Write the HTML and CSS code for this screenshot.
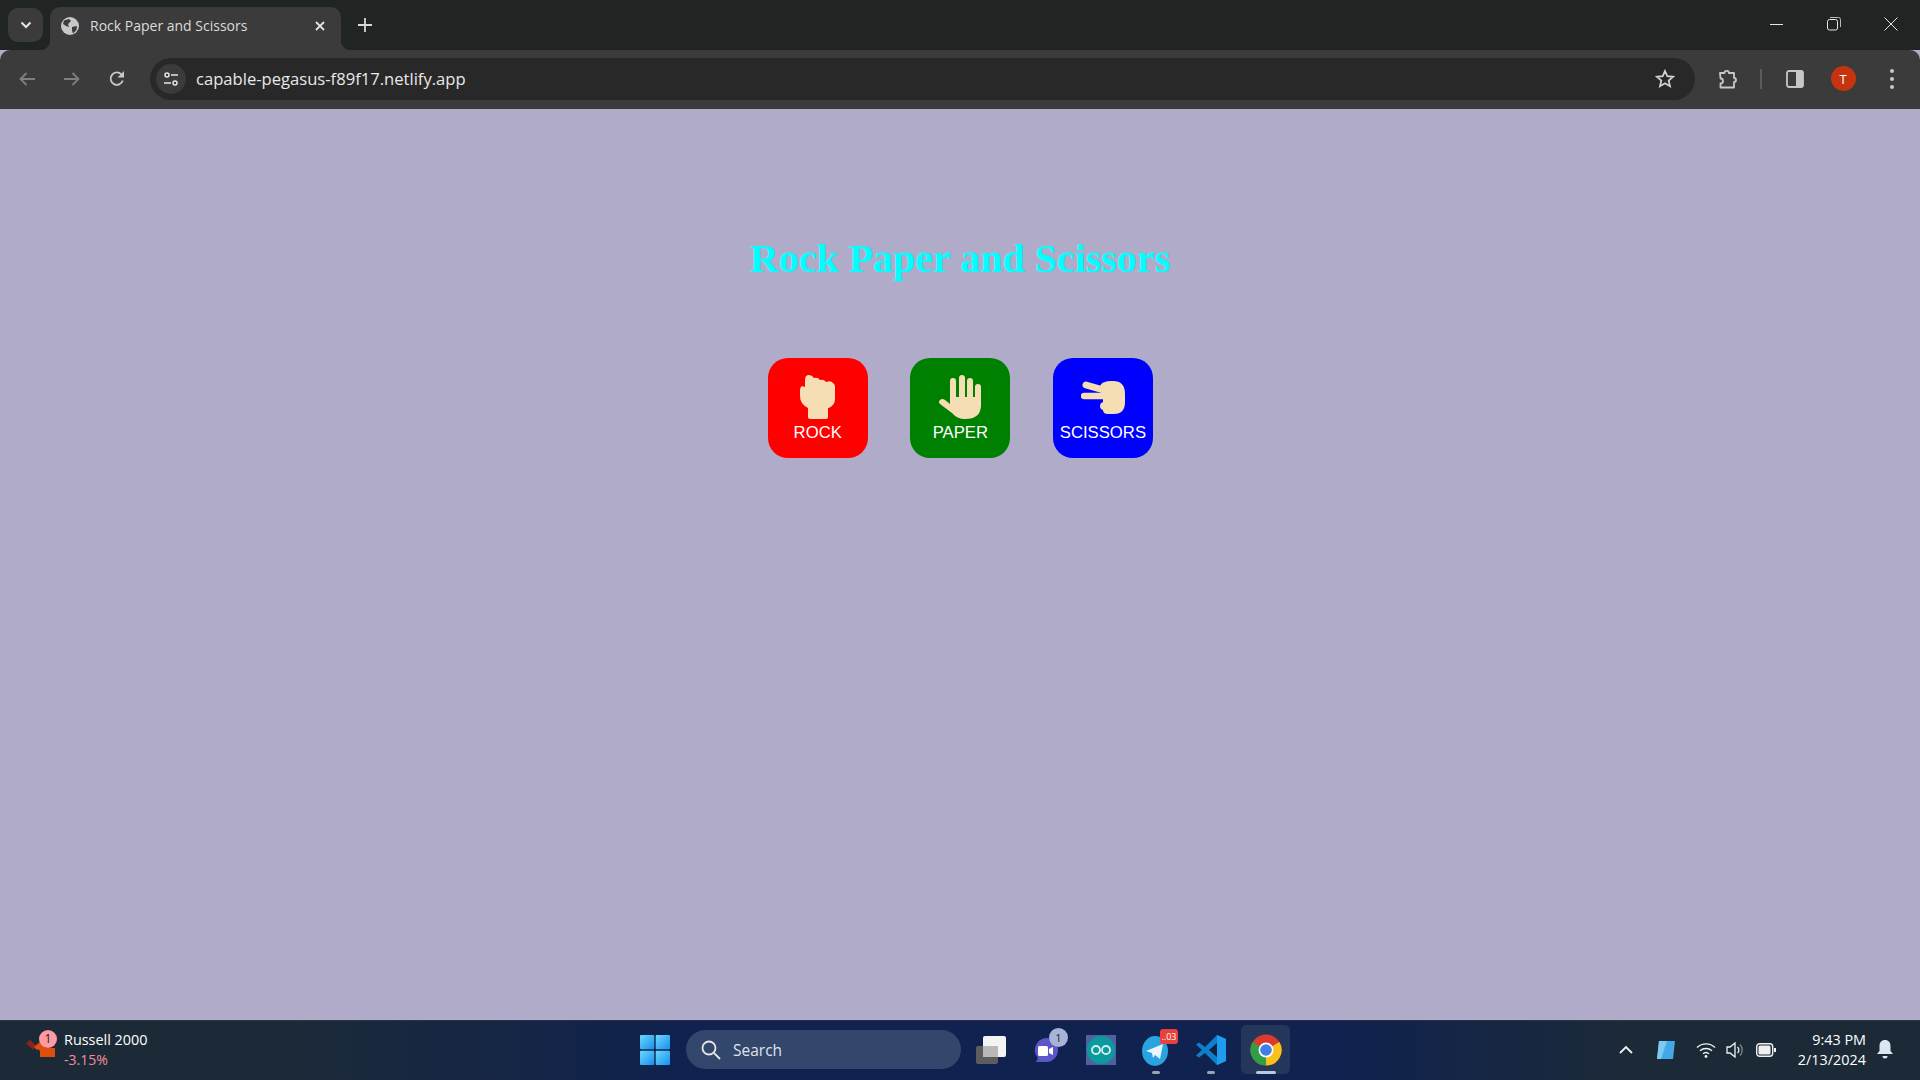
FILE: index.html
```html
<!DOCTYPE html>
<html>
<head>
    <title>Rock Paper and Scissors</title>
    <link rel="stylesheet" href="styles.css">
</head>
<body>
    <div class="tabstrip">
        <div class="tab-search">
            <svg width="12" height="8" viewBox="0 0 12 8"><path d="M1.500 1.500 6 6l4.500-4.500" fill="none" stroke="#e6e6e6" stroke-width="2"/></svg>
        </div>
        <div class="tab">
            <svg class="tab-globe" width="18" height="18" viewBox="0 0 18 18">
                <circle cx="9" cy="9" r="9" fill="#c7c7c7"/>
                <path d="M3 3.500 8 2l2 2-3 3 1 3-3-1-3-2zM11 10l5-1-.5 4-3.500 3.500-1-3z" fill="#3b3b3b"/>
            </svg>
            <span class="tab-title">Rock Paper and Scissors</span>
            <svg width="10" height="10" viewBox="0 0 10 10"><path d="M1 1l8 8M9 1l-8 8" stroke="#e2e2e2" stroke-width="1.800"/></svg>
        </div>
        <div class="new-tab">
            <svg width="14" height="14" viewBox="0 0 14 14"><path d="M7 0v14M0 7h14" stroke="#d8d8d8" stroke-width="1.800"/></svg>
        </div>
        <div class="window-controls">
            <svg width="14" height="14" viewBox="0 0 14 14"><path d="M0 7.500h13" stroke="#e6e6e6"/></svg>
            <svg width="14" height="14" viewBox="0 0 14 14"><rect x=".5" y="2.500" width="10" height="10.500" rx="2" fill="none" stroke="#e6e6e6"/><path d="M3 .5h8.500a2 2 0 0 1 2 2V10" fill="none" stroke="#b8b8b8"/></svg>
            <svg width="14" height="14" viewBox="0 0 14 14"><path d="M.5.5l13 13M13.500.5l-13 13" stroke="#e6e6e6"/></svg>
        </div>
    </div>

    <div class="toolbar">
        <div class="tool-btn">
            <svg width="16" height="14" viewBox="0 0 16 14"><path d="M16 7H1.500M7.500 1l-6 6 6 6" fill="none" stroke="#7f7f7f" stroke-width="1.800"/></svg>
        </div>
        <div class="tool-btn">
            <svg width="16" height="14" viewBox="0 0 16 14"><path d="M0 7h14.500M8.500 1l6 6-6 6" fill="none" stroke="#7f7f7f" stroke-width="1.800"/></svg>
        </div>
        <div class="tool-btn">
            <svg width="16" height="16" viewBox="0 0 16 16"><path d="M13.800 9.500A6.200 6.200 0 1 1 12.500 3.500L14 5" fill="none" stroke="#c7c7c7" stroke-width="1.800"/><path d="M15 0v6.500H8.500z" fill="#c7c7c7"/></svg>
        </div>
        <div class="omnibox">
            <div class="site-info">
                <svg width="16" height="14" viewBox="0 0 16 14">
                    <circle cx="4" cy="3" r="2" fill="none" stroke="#e6e6e6" stroke-width="1.500"/>
                    <path d="M8 3h7M1 11h7" stroke="#e6e6e6" stroke-width="1.500"/>
                    <circle cx="12" cy="11" r="2" fill="none" stroke="#e6e6e6" stroke-width="1.500"/>
                </svg>
            </div>
            <span class="url">capable-pegasus-f89f17.netlify.app</span>
            <svg class="star" width="20" height="19" viewBox="0 0 20 19"><path d="M10 2l2.300 5.200 5.700.6-4.300 3.800 1.300 5.600-5-2.900-5 2.900 1.300-5.600L2 7.800l5.700-.6z" fill="none" stroke="#d0d0d0" stroke-width="1.800"/></svg>
        </div>
        <div class="tool-btn ext-btn">
            <svg width="22" height="20" viewBox="0 0 22 20"><path d="M3 4h4.500a2.200 2.200 0 0 1 4.400 0H17v5a2 2 0 0 1 0 4v5.500H3.500v-4a2.500 2.500 0 0 0 0-5z" fill="none" stroke="#c7c7c7" stroke-width="1.800" stroke-linejoin="round"/></svg>
        </div>
        <div class="tool-sep"></div>
        <div class="tool-btn panel-btn">
            <svg width="18" height="18" viewBox="0 0 18 18"><rect x="1" y="1" width="16" height="16" rx="2" fill="none" stroke="#c7c7c7" stroke-width="1.800"/><rect x="10" y="1" width="7" height="16" fill="#c7c7c7"/></svg>
        </div>
        <div class="avatar">T</div>
        <div class="menu-dots"><i></i><i></i><i></i></div>
    </div>

    <main class="page">
        <h1 class="game-title">Rock Paper and Scissors</h1>
        <div class="choices">
            <button class="choice rock">
                <svg width="35" height="44" viewBox="0 0 35 44"><path d="M5 5Q5 0 9 0q3 0 5 3 4-1 6 2 4-1 6 2 5-2 7 1 2 1 2 4v12q0 6-6 9h-1v9q0 2-2 2H10q-2 0-2-2v-9Q0 29 0 21v-6q0-3 2-4l3 1z" fill="#f5deb3"/></svg>
                <span>ROCK</span>
            </button>
            <button class="choice paper">
                <svg width="42" height="44" viewBox="0 0 42 44">
                    <g fill="#f5deb3">
                        <rect x="11" y="3" width="6" height="28" rx="3"/>
                        <rect x="20" y="0" width="6" height="30" rx="3"/>
                        <rect x="28" y="3" width="6" height="28" rx="3"/>
                        <rect x="36" y="9" width="6" height="24" rx="3"/>
                        <path d="M11 22h31v8q0 14-16 14-8 0-13-6L1 29q-2-2 0-4t5 0l5 4z"/>
                    </g>
                </svg>
                <span>PAPER</span>
            </button>
            <button class="choice scissors">
                <svg width="44" height="33" viewBox="0 0 44 33">
                    <path d="M5 4l21 6" stroke="#f5deb3" stroke-width="7" stroke-linecap="round"/>
                    <path d="M3 15h23" stroke="#f5deb3" stroke-width="6.500" stroke-linecap="round"/>
                    <path d="M24 1q2-1 6-1h2q12 0 12 13v8q0 12-11 12h-6q-5 0-5-4-3-1-3-4t3-4v-8l-3-6q0-5 5-6z" fill="#f5deb3"/>
                </svg>
                <span>SCISSORS</span>
            </button>
        </div>
    </main>

    <footer class="taskbar">
        <div class="widget">
            <div class="widget-icon">
                <svg width="30" height="18" viewBox="0 0 30 18">
                    <path d="M0 3.500L4 0l7 6-4 3.500z" fill="#8a2418"/>
                    <path d="M8 7l6-5 6 6h9v9H14v-6l-2-2-1 1z" fill="#e04e0c"/>
                </svg>
                <span class="widget-badge">1</span>
            </div>
            <div class="widget-text">
                <div class="widget-name">Russell 2000</div>
                <div class="widget-change">-3.15%</div>
            </div>
        </div>

        <div class="task-center">
            <svg class="win-logo" width="30" height="30" viewBox="0 0 30 30">
                <defs><linearGradient id="win" x1="0" y1="0" x2="1" y2="1"><stop offset="0" stop-color="#6fd6fb"/><stop offset="1" stop-color="#1491ef"/></linearGradient></defs>
                <rect width="14.300" height="14.300" rx="1" fill="url(#win)"/>
                <rect x="15.700" width="14.300" height="14.300" rx="1" fill="url(#win)"/>
                <rect y="15.700" width="14.300" height="14.300" rx="1" fill="url(#win)"/>
                <rect x="15.700" y="15.700" width="14.300" height="14.300" rx="1" fill="url(#win)"/>
            </svg>
            <div class="search-pill">
                <svg width="20" height="20" viewBox="0 0 20 20"><circle cx="8" cy="8" r="6.500" fill="none" stroke="#e6e6e6" stroke-width="1.800"/><path d="M13 13l6 6" stroke="#e6e6e6" stroke-width="1.800"/></svg>
                <span>Search</span>
            </div>
            <div class="task-icon">
                <svg width="30" height="28" viewBox="0 0 30 28">
                    <rect y="10" width="22" height="18" rx="2" fill="#5d5d5d"/>
                    <rect x="7" width="23" height="21" rx="2" fill="#f4f4f4"/>
                    <rect x="7" y="10" width="15" height="11" fill="#b8b8b8"/>
                </svg>
            </div>
            <div class="task-icon">
                <svg width="28" height="30" viewBox="0 0 28 30">
                    <path d="M14 3a12 12 0 0 1 0 24H4l2-4A12 12 0 0 1 14 3z" fill="#5b57c9"/>
                    <rect x="6" y="11" width="10" height="10" rx="1.500" fill="#fff"/>
                    <path d="M17 14l4-2v8l-4-2z" fill="#fff"/>
                </svg>
                <span class="task-badge meet-badge">1</span>
            </div>
            <div class="task-icon">
                <svg width="30" height="30" viewBox="0 0 30 30">
                    <rect width="30" height="30" fill="#51609f"/>
                    <circle cx="15" cy="15" r="14" fill="#0d9a9f"/>
                    <circle cx="10" cy="15" r="4" fill="none" stroke="#d9f1f1" stroke-width="1.800"/>
                    <circle cx="20" cy="15" r="4" fill="none" stroke="#d9f1f1" stroke-width="1.800"/>
                </svg>
            </div>
            <div class="task-icon is-open">
                <svg width="28" height="32" viewBox="0 0 28 32">
                    <ellipse cx="13" cy="17" rx="13" ry="15" fill="#2aa3e0"/>
                    <path d="M4 17l17-7-3 15-5-4-2 3-1-5z" fill="#e9f6fd"/>
                </svg>
                <span class="task-badge tg-badge">..03</span>
            </div>
            <div class="task-icon is-open">
                <svg width="30" height="30" viewBox="0 0 30 30">
                    <path d="M21 0l9 4v22l-9 4-12-12-6 4.500L0 20.500 6 15 0 9.500 3 7.500 9 12z" fill="#0f7fcc"/>
                    <path d="M21 8l-8 7 8 7z" fill="#10223f"/>
                    <path d="M21 0l9 4v22l-9 4z" fill="#1f9cf0"/>
                </svg>
            </div>
            <div class="task-icon is-active">
                <svg width="32" height="32" viewBox="0 0 32 32">
                    <circle cx="16" cy="16" r="15.500" fill="#dd3a2e"/>
                    <path d="M16 16L2.600 8A15.500 15.500 0 0 0 16 31.500z" fill="#2f9e47"/>
                    <path d="M16 16l13.400-8A15.500 15.500 0 0 1 16 31.500z" fill="#f8c21c"/>
                    <circle cx="16" cy="16" r="7.500" fill="#fff"/>
                    <circle cx="16" cy="16" r="5.800" fill="#3f7fe8"/>
                </svg>
            </div>
        </div>

        <div class="tray">
            <svg class="tray-chevron" width="14" height="9" viewBox="0 0 14 9"><path d="M1 8l6-6 6 6" fill="none" stroke="#f0f0f0" stroke-width="1.800"/></svg>
            <svg class="tray-app" width="20" height="20" viewBox="0 0 20 20"><path d="M3 1h16l-2 18H1z" fill="#45a8e6"/><path d="M3 1h8L5 19H1z" fill="#7cc9f3"/></svg>
            <svg class="tray-wifi" width="20" height="16" viewBox="0 0 20 16"><g fill="none" stroke="#f0f0f0" stroke-width="1.400"><path d="M1 5.500a13 13 0 0 1 18 0"/><path d="M4 8.800a9 9 0 0 1 12 0"/><path d="M7 11.800a4.500 4.500 0 0 1 6 0"/></g><circle cx="10" cy="14.500" r="1.400" fill="#f0f0f0"/></svg>
            <svg class="tray-volume" width="19" height="16" viewBox="0 0 19 16"><path d="M1 5h3l5-4v14l-5-4H1z" fill="none" stroke="#f0f0f0" stroke-width="1.300"/><path d="M11.500 5a4 4 0 0 1 0 6" fill="none" stroke="#f0f0f0" stroke-width="1.300"/><path d="M14 2.500a8 8 0 0 1 0 11" fill="none" stroke="#7d8791" stroke-width="1.300"/></svg>
            <svg class="tray-battery" width="20" height="14" viewBox="0 0 20 14"><rect x=".7" y=".7" width="16" height="12.600" rx="3" fill="none" stroke="#f0f0f0" stroke-width="1.400"/><rect x="2.500" y="2.500" width="12" height="9" rx="1.500" fill="#f0f0f0"/><rect x="18" y="5" width="2" height="4" fill="#f0f0f0"/></svg>
            <div class="clock">
                <div>9:43 PM</div>
                <div>2/13/2024</div>
            </div>
            <svg class="tray-bell" width="16" height="20" viewBox="0 0 16 20"><path d="M8 0c3.500 0 5.500 2.500 5.500 6v5l2.500 3H0l2.500-3V6C2.500 2.500 4.500 0 8 0z" fill="#dbe6f3"/><path d="M5.500 16h5a2.500 2.500 0 0 1-5 0z" fill="#dbe6f3"/></svg>
        </div>
    </footer>
</body>
</html>
```

FILE: styles.css
```css
* {
    box-sizing: border-box;
}
body {
    margin: 0;
    height: 1080px;
    overflow: hidden;
    display: flex;
    flex-direction: column;
    background: #b0abc9;
    font-family: "Open Sans", sans-serif;
}
svg {
    display: block;
    flex-shrink: 0;
}

/* browser tabs */
.tabstrip {
    height: 50px;
    display: flex;
    background: #202423;
}
.tab-search {
    width: 35px;
    height: 34px;
    margin: 8px 0 0 8px;
    background: #3b3b3b;
    border-radius: 10px;
    display: flex;
    align-items: center;
    justify-content: center;
}
.tab {
    position: relative;
    width: 291px;
    height: 43px;
    margin: 7px 0 0 7px;
    padding: 0 16px 5px 11px;
    background: #3b3b3b;
    border-radius: 10px 10px 0 0;
    display: flex;
    align-items: center;
    color: #dcdcdc;
    font-size: 14px;
}
.tab::before,
.tab::after {
    content: "";
    position: absolute;
    bottom: 0;
    width: 10px;
    height: 10px;
}
.tab::before {
    left: -10px;
    background: radial-gradient(circle at 0 0, #202423 10px, #3b3b3b 10.5px);
}
.tab::after {
    right: -10px;
    background: radial-gradient(circle at 100% 0, #202423 10px, #3b3b3b 10.5px);
}
.tab-title {
    flex: 1;
    margin: 0 0 2px 11px;
}
.new-tab {
    margin: 18px 0 0 17px;
}
.window-controls {
    margin-left: auto;
    padding: 17px 22px 0 0;
    display: flex;
    gap: 43px;
}

/* address bar */
.toolbar {
    height: 59px;
    padding: 0 0 2px 4px;
    display: flex;
    align-items: center;
    background: #3b3b3b;
    border-radius: 10px 10px 0 0;
}
.tool-btn {
    width: 45px;
    display: flex;
    justify-content: center;
}
.omnibox {
    width: 1545px;
    height: 42px;
    margin-left: 11px;
    padding: 0 20px 0 6px;
    display: flex;
    align-items: center;
    background: #282828;
    border-radius: 21px;
}
.site-info {
    width: 30px;
    height: 30px;
    background: #3b3b3b;
    border-radius: 50%;
    display: flex;
    align-items: center;
    justify-content: center;
}
.url {
    flex: 1;
    margin-left: 10px;
    color: #e8e8e8;
    font-size: 16.6px;
}
.ext-btn {
    width: 36px;
    margin-left: 15px;
}
.tool-sep {
    width: 2px;
    height: 20px;
    margin-left: 14px;
    background: #5c5c5c;
}
.panel-btn {
    width: 36px;
    margin-left: 15px;
}
.avatar {
    width: 25px;
    height: 25px;
    margin-left: 17.5px;
    border-radius: 50%;
    background: #c5340f;
    color: #fff;
    font-size: 13px;
    display: flex;
    align-items: center;
    justify-content: center;
}
.menu-dots {
    width: 36px;
    margin-left: 18.5px;
    display: flex;
    flex-direction: column;
    align-items: center;
    gap: 4px;
}
.menu-dots i {
    width: 4px;
    height: 4px;
    border-radius: 50%;
    background: #c7c7c7;
}

/* the game */
.page {
    flex: 1;
    padding-top: 126px;
    text-align: center;
}
.game-title {
    margin: 0 0 76px;
    color: #0ff;
    font-family: "Liberation Serif", serif;
    font-size: 40px;
    font-weight: bold;
}
.choices {
    display: flex;
    justify-content: center;
    gap: 42.6px;
    padding-left: 0.6px;
}
.choice {
    width: 100px;
    height: 100px;
    padding: 17px 0 0;
    border: none;
    border-radius: 20px;
    color: #fff;
    font-family: "Liberation Sans", sans-serif;
    font-size: 16.7px;
    display: flex;
    flex-direction: column;
    align-items: center;
}
.choice span {
    margin-top: 4px;
}
.choice.rock {
    background: #f00;
}
.choice.paper {
    background: #008000;
}
.choice.scissors {
    background: #00f;
    padding-top: 23px;
}
.choice.scissors span {
    margin-top: 9px;
}

/* windows taskbar */
.taskbar {
    height: 60px;
    flex-shrink: 0;
    padding-bottom: 2px;
    display: flex;
    align-items: center;
    border-top: 1px solid #2a3340;
    background: linear-gradient(90deg, #1c2a38 0, #1c2a38 15%, #10224f 35%, #10224f 70%, #1c2a38 85%);
    color: #fff;
}
.widget {
    width: 640px;
    padding-left: 26px;
    display: flex;
    align-items: center;
}
.widget-icon {
    position: relative;
    width: 38px;
    height: 40px;
    padding-top: 10px;
}
.widget-badge {
    position: absolute;
    left: 13px;
    top: 0;
    width: 18px;
    height: 18px;
    border-radius: 50%;
    background: #ff9aa2;
    color: #222;
    font-size: 12px;
    line-height: 18px;
    text-align: center;
}
.widget-name {
    font-size: 14.4px;
    line-height: 20px;
}
.widget-change {
    font-size: 14px;
    line-height: 20px;
    color: #f58a9c;
}
.task-center {
    display: flex;
    align-items: center;
}
.win-logo {
    margin-right: 16px;
}
.search-pill {
    width: 275px;
    height: 39px;
    padding-left: 15px;
    display: flex;
    align-items: center;
    gap: 12px;
    background: #33466b;
    border-radius: 20px;
    color: #dfe4ec;
    font-size: 15.5px;
}
.task-icon {
    position: relative;
    width: 49px;
    height: 49px;
    margin-left: 6px;
    display: flex;
    align-items: center;
    justify-content: center;
    border-radius: 5px;
}
.search-pill + .task-icon {
    margin-left: 5px;
}
.task-badge {
    position: absolute;
    font-size: 11px;
    text-align: center;
}
.meet-badge {
    right: 2px;
    top: 3px;
    width: 19px;
    height: 19px;
    border-radius: 50%;
    background: #a7b4d6;
    color: #1a2340;
    line-height: 19px;
}
.tg-badge {
    right: 2px;
    top: 4px;
    width: 18px;
    height: 15px;
    border-radius: 3px;
    background: #e8403a;
    color: #fff;
    font-size: 9px;
    line-height: 15px;
}
.is-open::after,
.is-active::after {
    content: "";
    position: absolute;
    bottom: 0;
    left: 50%;
    width: 8px;
    height: 3px;
    margin-left: -4px;
    border-radius: 2px;
    background: #9aa3b2;
}
.is-active {
    background: #243659;
}
.is-active::after {
    width: 20px;
    margin-left: -10px;
    background: #b9c7e0;
}
.tray {
    flex: 1;
    display: flex;
    align-items: center;
    padding-left: 329px;
}
.tray-app {
    margin-left: 23px;
}
.tray-wifi {
    margin-left: 20px;
}
.tray-volume {
    margin-left: 10px;
}
.tray-battery {
    margin-left: 11px;
}
.clock {
    margin-left: 18px;
    width: 72px;
    text-align: right;
    font-size: 14.4px;
    line-height: 20px;
}
.tray-bell {
    margin-left: 11px;
}
```
